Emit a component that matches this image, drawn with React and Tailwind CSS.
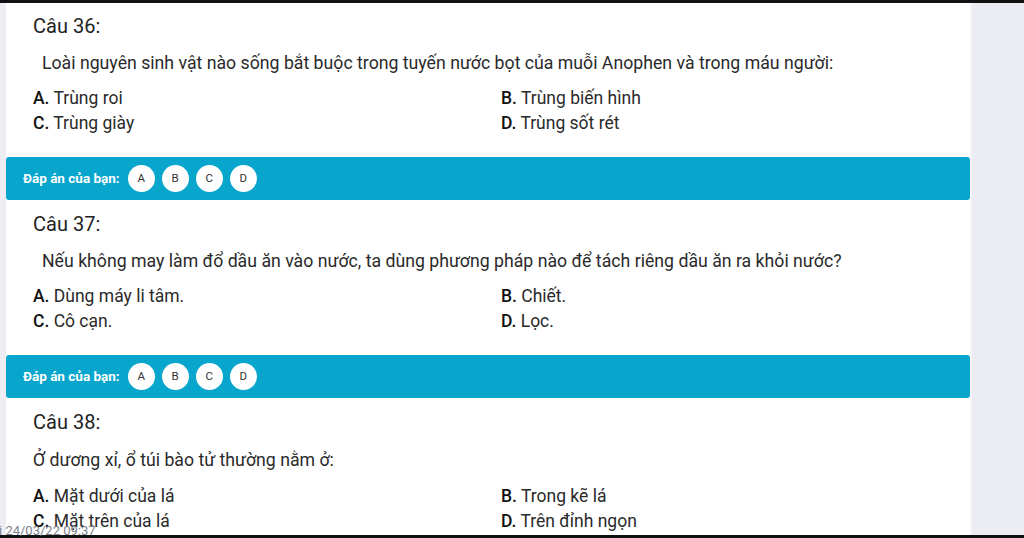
import React from "react";

const questions = [
  {
    n: 36,
    indent: true,
    q: "Loài nguyên sinh vật nào sống bắt buộc trong tuyến nước bọt của muỗi Anophen và trong máu người:",
    opts: ["Trùng roi", "Trùng biến hình", "Trùng giày", "Trùng sốt rét"],
  },
  {
    n: 37,
    indent: true,
    q: "Nếu không may làm đổ dầu ăn vào nước, ta dùng phương pháp nào để tách riêng dầu ăn ra khỏi nước?",
    opts: ["Dùng máy li tâm.", "Chiết.", "Cô cạn.", "Lọc."],
  },
  {
    n: 38,
    indent: false,
    q: "Ở dương xỉ, ổ túi bào tử thường nằm ở:",
    opts: ["Mặt dưới của lá", "Trong kẽ lá", "Mặt trên của lá", "Trên đỉnh ngọn"],
  },
];

const letters = ["A", "B", "C", "D"];

function Question({ data, first }) {
  return (
    <div className={`shrink-0 bg-white pl-[27px] pr-4 pb-[21px] ${first ? "pt-[9px]" : "pt-[10px]"}`}>
      <div className="text-[20px] leading-[28px] text-[#222]">Câu {data.n}:</div>
      <div
        className={`text-[17.7px] leading-[24px] text-[#2a2a2a] whitespace-nowrap ${
          data.indent ? "pl-[9px] mt-[11px]" : "mt-[12px]"
        }`}
      >
        {data.q}
      </div>
      <div
        className={`grid grid-cols-[468px_1fr] text-[17.5px] leading-[25px] text-[#2a2a2a] ${
          data.indent ? "mt-[11px]" : "mt-[12px]"
        }`}
      >
        {data.opts.map((o, i) => (
          <div key={i}>
            <span className="font-medium text-[#111]">{letters[i]}.</span> {o}
          </div>
        ))}
      </div>
    </div>
  );
}

function AnswerBar() {
  return (
    <div className="shrink-0 h-[43px] rounded-[3px] bg-[#08a5cd] flex items-center pl-[17px] gap-[8px]">
      <span className="text-white font-bold text-[13.5px]">Đáp án của bạn:</span>
      <div className="flex gap-[7px]">
        {letters.map((l) => (
          <div
            key={l}
            className="w-[27px] h-[27px] rounded-full bg-white flex items-center justify-center text-[11.5px] text-[#333]"
          >
            {l}
          </div>
        ))}
      </div>
    </div>
  );
}

export default function App() {
  return (
    <div
      className="relative w-[1024px] h-[538px] overflow-hidden flex flex-col bg-[#eceef3]"
      style={{ fontFamily: "Roboto, 'Noto Sans', sans-serif" }}
    >
      <div className="h-[3px] bg-[#111] shrink-0" />
      <div className="flex-1 min-h-0 flex overflow-hidden">
        <div className="w-[6px] bg-[#eceef3] shrink-0" />
        <div className="w-[964px] shrink-0 flex flex-col bg-white overflow-hidden">
          <Question data={questions[0]} first />
          <AnswerBar />
          <Question data={questions[1]} />
          <AnswerBar />
          <Question data={questions[2]} />
        </div>
        <div className="flex-1 bg-[#ebedf2] border-l-2 border-[#f4f6f9]" />
      </div>
      <div className="h-[3px] bg-[#111] shrink-0" />
      <div className="absolute left-[-1px] bottom-[1px] text-[13px] leading-[13px] text-[#7d828c]">
        i 24/03/22 09:37
      </div>
    </div>
  );
}
